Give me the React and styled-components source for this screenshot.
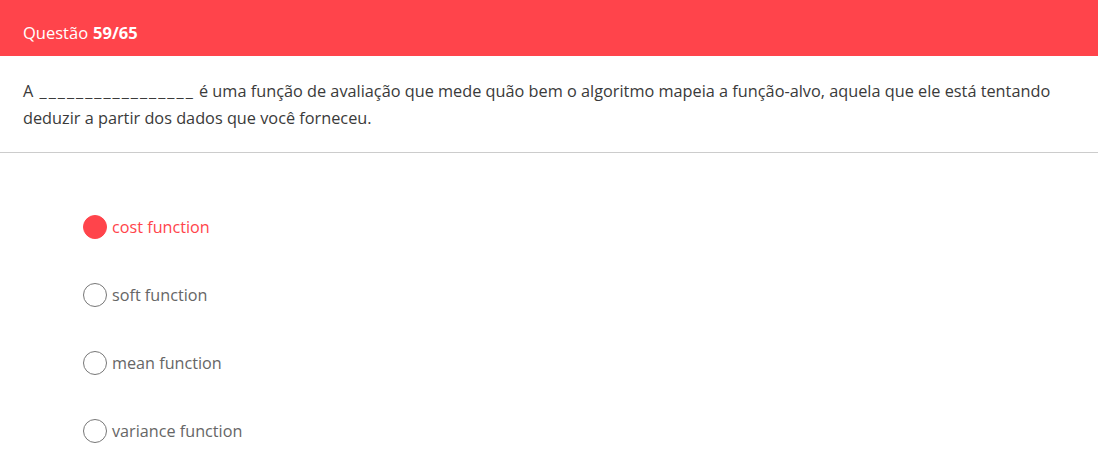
import React from 'react'
import styled, { createGlobalStyle } from 'styled-components'

const GlobalStyle = createGlobalStyle`
    body {
        margin: 0;
        background: #fff;
        font-family: "Open Sans", "Noto Sans", sans-serif;
    }
`

const options = ['cost function', 'soft function', 'mean function', 'variance function']

const App = () => {
    const selected = 0
    return (
        <Page>
            <GlobalStyle />
            <Header>Questão <b>59/65</b></Header>
            <Question>
                A <Blank>_________________</Blank> é uma função de avaliação que mede quão bem o algoritmo mapeia a função-alvo, aquela que ele está tentando deduzir a partir dos dados que você forneceu.
            </Question>
            <Options>
                {options.map((opt, i) => (
                    <Option key={opt} active={i === selected}>
                        <Radio active={i === selected} />
                        <span>{opt}</span>
                    </Option>
                ))}
            </Options>
        </Page>
    )
}

const Page = styled.div`
    width: 100%;
`

const Header = styled.div`
    height: 56px;
    background-color: #ff444b;
    color: #fff;
    font-size: 16.5px;
    display: flex;
    align-items: center;
    padding: 0 23px;
    padding-top: 8px;
    box-sizing: border-box;
    b { font-weight: 700; margin-left: 5px; }
`

const Question = styled.div`
    padding: 22px 40px 20px 23px;
    font-size: 16.3px;
    line-height: 27px;
    color: #3a3a3a;
    border-bottom: 1px solid #ccc;
`

const Blank = styled.span`
    letter-spacing: 2px;
    margin-left: 2px;
`

const Options = styled.div`
    display: flex;
    flex-direction: column;
    gap: 44px;
    padding: 62px 0 0 83px;
`

const Option = styled.label`
    display: flex;
    align-items: center;
    gap: 5px;
    height: 24px;
    font-size: 16.2px;
    color: ${p => (p.active ? '#ff444b' : '#666')};
    cursor: pointer;
`

const Radio = styled.span`
    width: 24px;
    height: 24px;
    box-sizing: border-box;
    border-radius: 50%;
    border: 1px solid ${p => (p.active ? '#ff444b' : '#777')};
    background-color: ${p => (p.active ? '#ff444b' : '#fff')};
    flex-shrink: 0;
`

export default App
